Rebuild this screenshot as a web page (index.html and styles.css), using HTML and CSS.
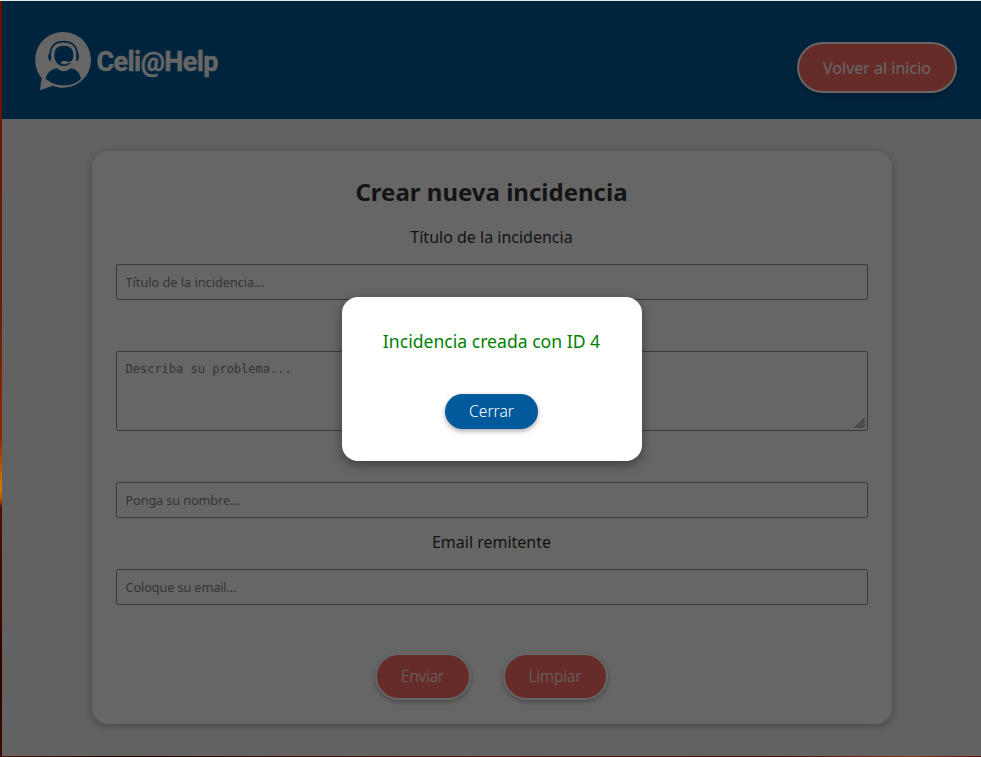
FILE: index.html
```html
<!DOCTYPE html>
<html lang="es">
<head>
<meta charset="utf-8">
<title>Celi@Help</title>
<link rel="stylesheet" href="styles.css">
</head>
<body>
<div class="page">
  <header class="header">
    <div class="brand">
      <svg class="brand-icon" viewBox="0 0 210 210" aria-hidden="true">
        <path class="light" d="M99 21C146 21 183 57 183 105C183 151 146 188 99 188C88 188 78 186 69 182L30 196L35 158C22 145 16 126 16 105C16 57 53 21 99 21Z"/>
        <path class="line" d="M61 86C61 62 78 50 101 50S141 62 141 86"/>
        <path class="dark" d="M63 82C52 83 52 107 63 109ZM139 82C150 83 150 107 139 109Z"/>
        <path class="dark" d="M101 62C120 62 130 72 130 91C130 110 118 123 101 123C84 123 73 110 73 91C73 72 82 62 101 62Z"/>
        <path class="mic" d="M135 98C133 108 125 113 108 113"/>
        <rect class="light" x="93" y="108" width="20" height="10" rx="5"/>
        <path class="dark" d="M47 161C52 142 65 132 81 130C92 142 111 142 122 130C138 132 149 143 153 161C139 175 121 181 103 181C82 181 61 174 47 161Z"/>
      </svg>
      <span class="brand-name">Celi@Help</span>
    </div>
    <button class="btn btn-home">Volver al inicio</button>
  </header>
  <main class="main">
    <form class="card">
      <h2 class="title">Crear nueva incidencia</h2>
      <label class="label" for="titulo">Título de la incidencia</label>
      <input class="field" id="titulo" placeholder="Título de la incidencia...">
      <div class="area-wrap">
        <textarea class="field area" placeholder="Describa su problema..."></textarea>
        <svg class="grip" viewBox="0 0 11 11" aria-hidden="true"><path d="M0 11L11 0M3.5 11L11 3.5M7 11L11 7"/></svg>
      </div>
      <input class="field name" placeholder="Ponga su nombre...">
      <label class="label" for="email">Email remitente</label>
      <input class="field" id="email" placeholder="Coloque su email...">
      <div class="actions">
        <button class="btn btn-send" type="button">Enviar</button>
        <button class="btn btn-clear" type="button">Limpiar</button>
      </div>
    </form>
  </main>
</div>
<div class="overlay">
  <div class="modal" role="dialog">
    <p class="message">Incidencia creada con ID 4</p>
    <button class="btn-close">Cerrar</button>
  </div>
</div>
</body>
</html>
```
FILE: styles.css
```css
* { box-sizing: border-box; }
body {
  margin: 0;
  height: 757px;
  padding: 1px 0 1px 2px;
  overflow: hidden;
  font-family: "Noto Sans", sans-serif;
  font-size: 16px;
  color: #333;
  background:
    linear-gradient(#e8e8e8, #e8e8e8) 0 0 / 100% 1px no-repeat,
    linear-gradient(90deg, #4a1208, #2a0602 12%, #5a1609 50%, #4a1006 80%, #8a3a10 93%, #5a1609) 0 100% / 100% 1px no-repeat,
    linear-gradient(#641400 0, #701a04 40%, #8a2a04 58%, #d87800 64.5%, #b85004 66%, #4c1006 67%, #3c0602 80%, #2c0402 90%, #3a0a04);
}
.page { height: 755px; background: #f5f5f5; }
.header {
  height: 118px;
  padding: 0 24px 0 28px;
  display: flex;
  justify-content: space-between;
  background: #005a9c;
}
.brand { display: flex; align-items: center; height: 118px; }
.brand-icon { width: 70px; height: 70px; flex: none; }
.light { fill: #fff; }
.dark { fill: #005a9c; }
.line { fill: none; stroke: #005a9c; stroke-width: 5; }
.mic { fill: none; stroke: #fff; stroke-width: 4; }
.brand-name {
  font: bold 27px/32px Roboto, sans-serif;
  letter-spacing: -0.6px;
  color: #fff;
  margin: 3px 0 0 -3.5px;
  -webkit-text-stroke: 0.4px #fff;
}
.btn {
  border: 2px solid #fff;
  border-radius: 26px;
  background: #ff6f67;
  color: #fff;
  font: 16px "Noto Sans", sans-serif;
  padding: 0;
  box-shadow: 0 2px 5px rgba(0, 0, 0, .3);
}
.btn-home { width: 160px; height: 51px; margin-top: 41px; }
.main { padding-top: 32px; display: flex; justify-content: center; }
.card {
  width: 800px;
  height: 573px;
  margin-left: 1px;
  padding: 24px;
  border-radius: 16px;
  background: #fff;
  box-shadow: 0 2px 8px rgba(0, 0, 0, .3);
  display: flex;
  flex-direction: column;
}
.title { margin: 0 1px 16px 0; font-size: 24px; line-height: 34px; text-align: center; }
.label { height: 24px; line-height: 24px; margin: 0 1px 15px 0; text-align: center; }
.field {
  width: 100%;
  height: 36px;
  flex: none;
  padding: 0 8.5px;
  border: 1px solid #8f8f9d;
  border-radius: 2px;
  background: #fff;
  font: 12.7px "Noto Sans", sans-serif;
}
.field::placeholder { color: #858585; opacity: 1; }
.name::placeholder, #email::placeholder { letter-spacing: -0.1px; }
.area-wrap { position: relative; height: 80px; margin: 51px 0; }
.area {
  display: block;
  height: 80px;
  padding: 9px 8.5px;
  resize: none;
  font: 12px/16px "DejaVu Sans Mono", monospace;
}
.grip {
  position: absolute;
  right: 3px;
  bottom: 3px;
  width: 10px;
  height: 10px;
  stroke: #888;
  stroke-width: 1.4;
}
.name { margin-bottom: 12px; }
.actions { display: flex; justify-content: center; gap: 32px; margin: 48px 2px 0 0; }
.btn-send { width: 96px; height: 47px; }
.btn-clear { width: 105px; height: 47px; }
.btn-send, .btn-clear { font-size: 15.6px; font-weight: 300; padding-bottom: 2px; }
.overlay {
  position: absolute;
  inset: 1px 0 1px 2px;
  background: rgba(0, 0, 0, .6);
  display: flex;
  justify-content: center;
  align-items: center;
}
.modal {
  width: 300px;
  height: 164px;
  margin-left: 1px;
  padding: 32px 1px 0 0;
  border-radius: 16px;
  background: #fff;
  box-shadow: 0 4px 12px rgba(0, 0, 0, .4);
  display: flex;
  flex-direction: column;
  align-items: center;
}
.message { margin: 0; font-size: 17.6px; line-height: 25px; color: #008000; white-space: nowrap; }
.btn-close {
  margin-top: 40px;
  width: 93px;
  height: 35px;
  padding: 0;
  border: 0;
  border-radius: 18px;
  background: #005a9c;
  color: #fff;
  font: 300 15.6px "Noto Sans", sans-serif;
  box-shadow: 0 2px 5px rgba(0, 0, 0, .35);
}
```
